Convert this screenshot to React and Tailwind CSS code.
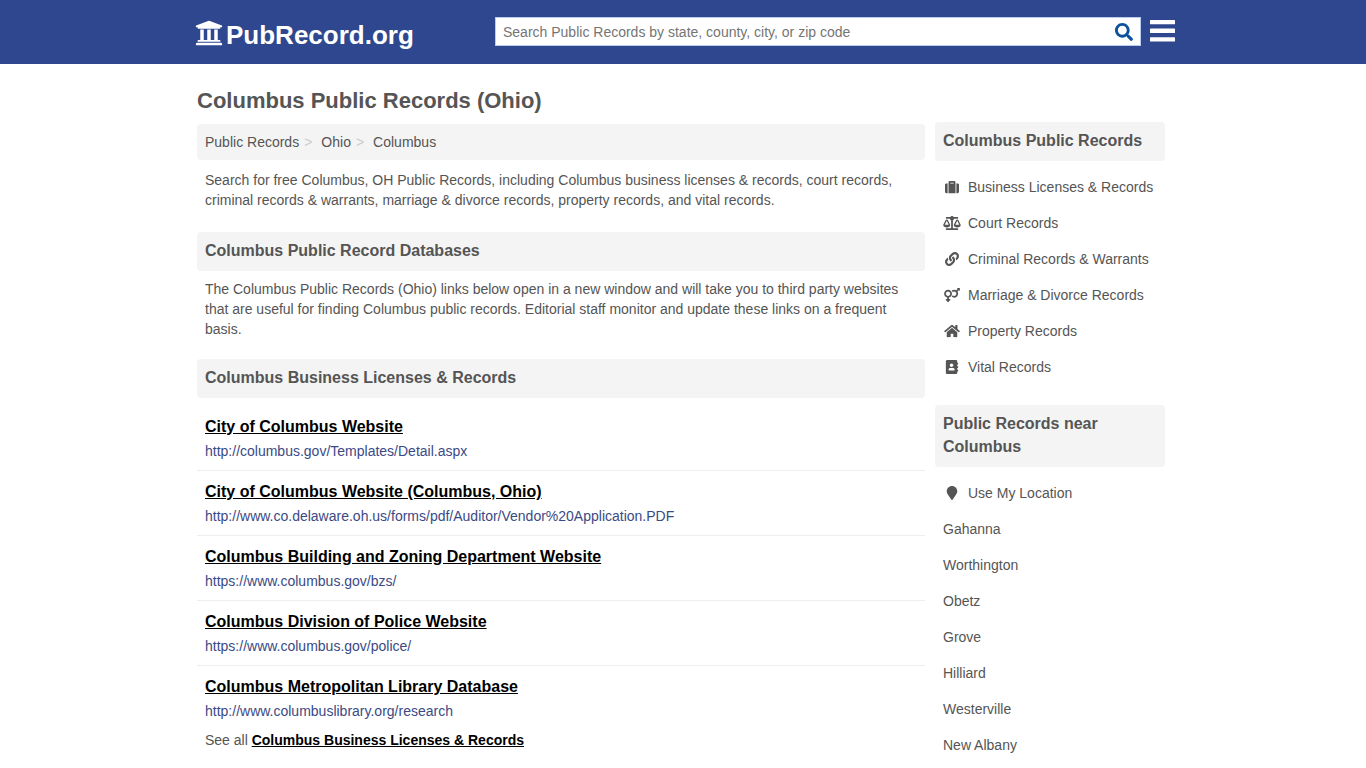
import React, { useState } from 'react';
import {
  FaUniversity,
  FaSearch,
  FaSuitcase,
  FaBalanceScale,
  FaLink,
  FaVenusMars,
  FaHome,
  FaAddressBook,
  FaMapMarker
} from 'react-icons/fa';

const BREADCRUMBS = ['Public Records', 'Ohio', 'Columbus'];

const RECORD_TYPES = [
  { label: 'Business Licenses & Records', icon: FaSuitcase },
  { label: 'Court Records', icon: FaBalanceScale, iconWidth: 'w-[18px]' },
  { label: 'Criminal Records & Warrants', icon: FaLink },
  { label: 'Marriage & Divorce Records', icon: FaVenusMars, iconWidth: 'w-[18px]' },
  { label: 'Property Records', icon: FaHome, iconWidth: 'w-4' },
  { label: 'Vital Records', icon: FaAddressBook }
];

const NEARBY = [
  { label: 'Use My Location', icon: FaMapMarker },
  { label: 'Gahanna' },
  { label: 'Worthington' },
  { label: 'Obetz' },
  { label: 'Grove' },
  { label: 'Hilliard' },
  { label: 'Westerville' },
  { label: 'New Albany' }
];

const LISTINGS = [
  {
    title: 'City of Columbus Website',
    url: 'http://columbus.gov/Templates/Detail.aspx'
  },
  {
    title: 'City of Columbus Website (Columbus, Ohio)',
    url: 'http://www.co.delaware.oh.us/forms/pdf/Auditor/Vendor%20Application.PDF'
  },
  {
    title: 'Columbus Building and Zoning Department Website',
    url: 'https://www.columbus.gov/bzs/'
  },
  {
    title: 'Columbus Division of Police Website',
    url: 'https://www.columbus.gov/police/'
  },
  {
    title: 'Columbus Metropolitan Library Database',
    url: 'http://www.columbuslibrary.org/research'
  }
];

const SectionHeading = ({ children }) => (
  <h2 className="rounded-sm bg-[#f4f4f4] px-2 pt-[7px] pb-[9px] text-base/[23px] font-bold">
    {children}
  </h2>
);

const Header = () => {
  const [query, setQuery] = useState('');

  return (
    <header className="bg-[#2f478f]">
      <div className="mx-auto flex h-16 max-w-[984px] items-center pb-[2px] pl-1">
        <a href="#home" className="flex w-[300px] shrink-0 items-center gap-[3px] pt-2 text-white">
          <FaUniversity className="mb-1 size-7" />
          <span className="text-[26px]/8 font-bold">PubRecord.org</span>
        </a>
        <form
          className="flex h-[29px] flex-1 items-center border border-[#b9cdee] bg-white"
          onSubmit={(e) => e.preventDefault()}
        >
          <input
            type="text"
            aria-label="Search public records"
            value={query}
            onChange={(e) => setQuery(e.target.value)}
            placeholder="Search Public Records by state, county, city, or zip code"
            className="min-w-0 flex-1 px-[7px] pt-[2px] text-sm text-[#555] outline-none placeholder:text-[#757575]"
          />
          <button type="submit" aria-label="Search" className="px-[7px] pt-[2px] text-[#0b519c]">
            <FaSearch className="size-[18px]" />
          </button>
        </form>
        <button type="button" aria-label="Menu" className="ml-[9px] text-white">
          <svg viewBox="0 0 25 22" className="h-[22px] w-[25px]" fill="currentColor">
            <rect y="0" width="25" height="4.3" rx="0.5" />
            <rect y="8.6" width="25" height="4.3" rx="0.5" />
            <rect y="17.2" width="25" height="4.3" rx="0.5" />
          </svg>
        </button>
      </div>
    </header>
  );
};

const SidebarSection = ({ title, items }) => (
  <section className="mb-5">
    <SectionHeading>{title}</SectionHeading>
    <ul className="mt-2">
      {items.map(({ label, icon: Icon, iconWidth = 'w-[14px]' }) => (
        <li key={label}>
          <a href="#records" className="flex h-9 items-center gap-[7px] px-2 text-sm">
            {Icon && (
              <span className="flex w-[18px] justify-center">
                <Icon className={`h-[14px] ${iconWidth}`} />
              </span>
            )}
            {label}
          </a>
        </li>
      ))}
    </ul>
  </section>
);

const App = () => (
  <div className="bg-white font-['Liberation_Sans',Arial,sans-serif] text-[#555]">
    <Header />
    <div className="mx-auto max-w-[972px] pr-1">
      <h1 className="pt-[21px] pb-[5px] text-[22px]/8 font-bold">Columbus Public Records (Ohio)</h1>
      <div className="flex items-start gap-[10px]">
        <main className="min-w-0 flex-1 pt-[2px] text-sm/5">
          <nav aria-label="Breadcrumb" className="rounded-sm bg-[#f4f4f4] p-2">
            <ol className="flex">
              {BREADCRUMBS.map((crumb, i) => (
                <li key={crumb}>
                  <a href="#crumb">{crumb}</a>
                  {i < BREADCRUMBS.length - 1 && (
                    <span className="mr-[9px] ml-[5px] text-[#ccc]">&gt;</span>
                  )}
                </li>
              ))}
            </ol>
          </nav>
          <p className="px-2 pt-[10px] pb-[22px]">
            Search for free Columbus, OH Public Records, including Columbus business licenses &amp;
            records, court records, criminal records &amp; warrants, marriage &amp; divorce records,
            property records, and vital records.
          </p>

          <SectionHeading>Columbus Public Record Databases</SectionHeading>
          <p className="px-2 pt-2 pb-5">
            The Columbus Public Records (Ohio) links below open in a new window and will take you to
            third party websites that are useful for finding Columbus public records. Editorial staff
            monitor and update these links on a frequent basis.
          </p>

          <SectionHeading>Columbus Business Licenses &amp; Records</SectionHeading>
          <ul className="mt-2">
            {LISTINGS.map((item) => (
              <li
                key={item.title}
                className="border-b border-[#eee] px-2 py-[9px] last:border-b-0"
              >
                <a href={item.url} className="block text-base/6 font-bold text-black underline">
                  {item.title}
                </a>
                <p className="mt-[2px] text-[#3b4a85]">{item.url}</p>
              </li>
            ))}
          </ul>
          <p className="px-2">
            See all{' '}
            <a href="#business" className="font-bold text-black underline">
              Columbus Business Licenses &amp; Records
            </a>
          </p>
        </main>

        <aside className="w-[230px] shrink-0">
          <SidebarSection title="Columbus Public Records" items={RECORD_TYPES} />
          <SidebarSection title="Public Records near Columbus" items={NEARBY} />
        </aside>
      </div>
    </div>
  </div>
);

export default App;
